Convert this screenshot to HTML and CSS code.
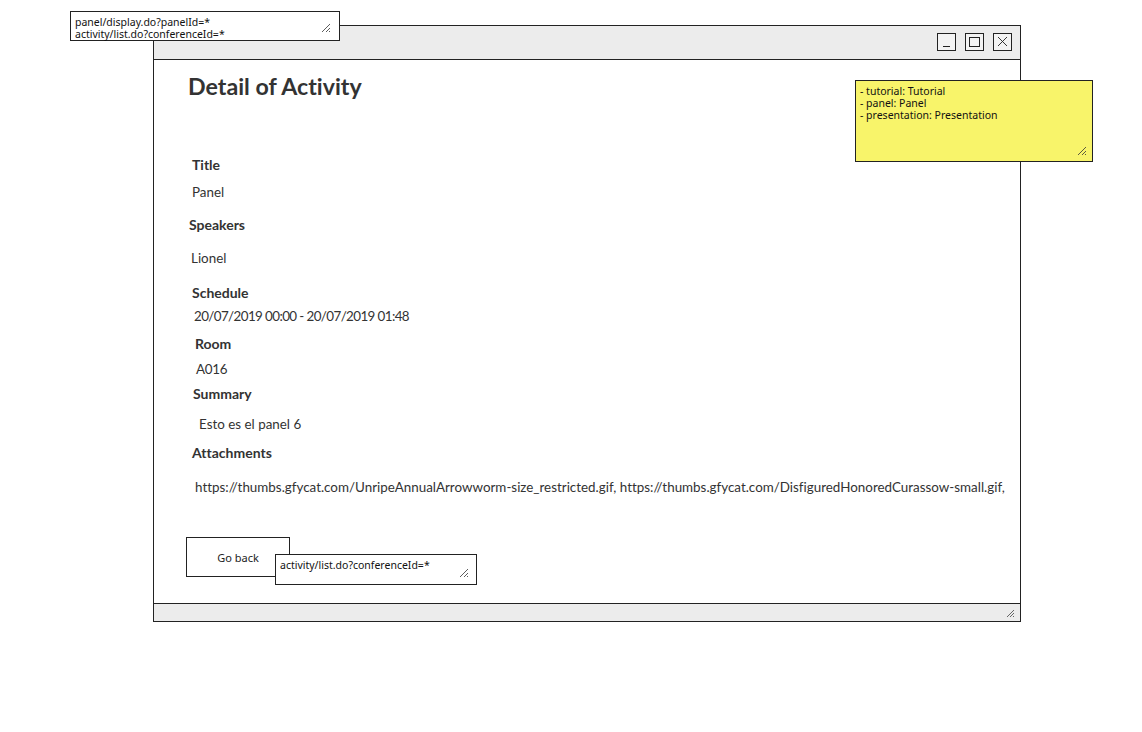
FILE: index.html
```html
<!DOCTYPE html>
<html>
<head>
<meta charset="utf-8">
<link rel="stylesheet" href="styles.css">
</head>
<body>
<div class="canvas">
  <div class="window">
    <div class="titlebar">
      <span class="wbtn"><svg width="17" height="16" viewBox="0 0 17 16"><line x1="5" y1="12.5" x2="12" y2="12.5" stroke="#222" stroke-width="1"/></svg></span>
      <span class="wbtn"><svg width="17" height="16" viewBox="0 0 17 16"><rect x="3.5" y="3.5" width="10" height="9" fill="none" stroke="#222" stroke-width="1"/></svg></span>
      <span class="wbtn"><svg width="17" height="16" viewBox="0 0 17 16"><path d="M4 3 L13 12 M13 3 L4 12" stroke="#222" stroke-width="0.9"/></svg></span>
    </div>
    <div class="content">
      <h1 class="heading">Detail of Activity</h1>
      <div class="lbl l-title">Title</div>
      <div class="val v-title">Panel</div>
      <div class="lbl l-speak">Speakers</div>
      <div class="val v-speak">Lionel</div>
      <div class="lbl l-sched">Schedule</div>
      <div class="val v-sched">20/07/2019 00:00 - 20/07/2019 01:48</div>
      <div class="lbl l-room">Room</div>
      <div class="val v-room">A016</div>
      <div class="lbl l-summ">Summary</div>
      <div class="val v-summ">Esto es el panel 6</div>
      <div class="lbl l-att">Attachments</div>
      <div class="val v-att">https://thumbs.gfycat.com/UnripeAnnualArrowworm-size_restricted.gif, https://thumbs.gfycat.com/DisfiguredHonoredCurassow-small.gif,</div>
      <div class="btnrow"><span class="goback">Go back</span></div>
    </div>
    <div class="statusbar">
      <svg class="grip" width="10" height="10" viewBox="0 0 10 10"><path d="M2 9 L9 2 M5 9 L9 5 M8 9 L9 8" stroke="#444" stroke-width="0.8"/></svg>
    </div>
  </div>

  <div class="note note-top">panel/display.do?panelId=*<br>activity/list.do?conferenceId=*<svg class="grip" width="10" height="10" viewBox="0 0 10 10"><path d="M1 9 L9 1 M5 9 L9 5 M8 9 L9 8" stroke="#333" stroke-width="0.8"/></svg></div>
  <div class="note note-yellow">- tutorial: Tutorial<br>- panel: Panel<br>- presentation: Presentation<svg class="grip" width="10" height="10" viewBox="0 0 10 10"><path d="M1 9 L9 1 M5 9 L9 5 M8 9 L9 8" stroke="#333" stroke-width="0.8"/></svg></div>
  <div class="note note-bottom">activity/list.do?conferenceId=*<svg class="grip" width="10" height="10" viewBox="0 0 10 10"><path d="M1 9 L9 1 M5 9 L9 5 M8 9 L9 8" stroke="#333" stroke-width="0.8"/></svg></div>
</div>
</body>
</html>
```
FILE: styles.css
```css
* { box-sizing: border-box; }
html, body { margin: 0; padding: 0; background: #fff; }
body { font-family: "Lato", "Open Sans", sans-serif; color: #333; font-variant-ligatures: none; }

.canvas {
  position: relative;
  width: 1142px;
  height: 732px;
  padding: 25px 0 0 153px;
}

.window {
  width: 868px;
  height: 597px;
  border: 1px solid #222;
  display: flex;
  flex-direction: column;
  background: #fff;
}

.titlebar {
  height: 34px;
  flex: none;
  background: #ececec;
  border-bottom: 1px solid #222;
  display: flex;
  justify-content: flex-end;
  align-items: flex-start;
  gap: 9px;
  padding: 7px 8px 0 0;
}
.wbtn {
  width: 19px;
  height: 18px;
  border: 1px solid #222;
  background: #f3f3f3;
  display: flex;
}

.content {
  flex: 1;
  padding: 11px 0 0 0;
  display: flex;
  flex-direction: column;
  align-items: flex-start;
}

.heading {
  margin: 0 0 0 34px;
  font-size: 23.2px;
  line-height: 30px;
  font-weight: 700;
  color: #333;
}

.lbl, .val {
  line-height: 18px;
  white-space: nowrap;
}
.lbl { font-weight: 700; font-size: 14px; }
.val { font-weight: 400; font-size: 13.4px; }

.l-title { margin: 55px 0 0 38px; }
.v-title { margin: 9px 0 0 38px; }
.l-speak { margin: 15px 0 0 35px; }
.v-speak { margin: 15px 0 0 37px; }
.l-sched { margin: 17px 0 0 38px; }
.v-sched { margin: 5px 0 0 40px; letter-spacing: -0.6px; }
.l-room  { margin: 10px 0 0 41px; }
.v-room  { margin: 7px 0 0 42px; letter-spacing: -0.3px; }
.l-summ  { margin: 7px 0 0 39px; }
.v-summ  { margin: 12px 0 0 45px; }
.l-att   { margin: 11px 0 0 38px; }
.v-att   { margin: 16px 0 0 41px; }

.btnrow { margin: 41px 0 0 32px; }
.goback {
  display: flex;
  align-items: center;
  justify-content: center;
  width: 104px;
  height: 40px;
  border: 1px solid #222;
  background: #fff;
  font-family: "Noto Sans", "Open Sans", sans-serif;
  font-size: 11px;
  color: #222;
}

.statusbar {
  height: 18px;
  flex: none;
  background: #ececec;
  border-top: 1px solid #222;
  display: flex;
  justify-content: flex-end;
  align-items: center;
  padding-right: 5px;
}

.note {
  position: absolute;
  border: 1px solid #222;
  background: #fff;
  font-family: "Noto Sans", "Open Sans", sans-serif;
  font-size: 10.5px;
  line-height: 12px;
  color: #111;
  padding: 3px 4px;
}
.note .grip { position: absolute; right: 8px; bottom: 7px; }
.note-top { left: 70px; top: 11px; width: 270px; height: 30px; padding-top: 4px; }
.note-yellow { left: 855px; top: 80px; width: 238px; height: 82px; background: #f8f46a; padding-top: 4px; }
.note-yellow .grip { right: 5px; bottom: 5px; }
.note-bottom { left: 275px; top: 554px; width: 202px; height: 31px; padding-top: 4px; }
.note-bottom .grip { right: 7px; bottom: 6px; }
```
